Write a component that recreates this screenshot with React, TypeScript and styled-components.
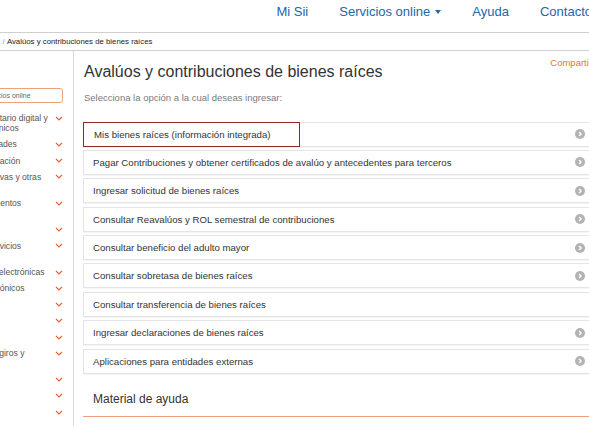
import React from "react";
import styled, { createGlobalStyle } from "styled-components";

const menuItems: string[][] = [
  ["Cumplimiento tributario digital y", "formularios electrónicos"],
  ["Término de actividades"],
  ["Proceso de fiscalización"],
  ["Multas administrativas y otras", "sanciones"],
  ["Registro de documentos", "tributarios"],
  ["Impuestos"],
  ["Certificados de servicios", "en línea"],
  ["Boletas de ventas electrónicas"],
  ["Documentos electrónicos"],
  ["Renta"],
  ["IVA"],
  ["Herencias"],
  ["Modificaciones de giros y", "sucursales"],
  ["Tasación"],
  ["Aduanas"],
  ["Otros"],
];

const options = [
  { label: "Mis bienes raíces (información integrada)", icon: true, active: true },
  { label: "Pagar Contribuciones y obtener certificados de avalúo y antecedentes para terceros", icon: true },
  { label: "Ingresar solicitud de bienes raíces", icon: true },
  { label: "Consultar Reavalúos y ROL semestral de contribuciones", icon: true },
  { label: "Consultar beneficio del adulto mayor", icon: true },
  { label: "Consultar sobretasa de bienes raíces", icon: true },
  { label: "Consultar transferencia de bienes raíces", icon: false },
  { label: "Ingresar declaraciones de bienes raíces", icon: true },
  { label: "Aplicaciones para entidades externas", icon: true },
];

const App: React.FC = () => {
  return (
    <>
      <GlobalStyle />
      <Frame>
        <Header>
          <NavLink href="#">Mi Sii</NavLink>
          <NavLink href="#">
            Servicios online <Caret />
          </NavLink>
          <NavLink href="#">Ayuda</NavLink>
          <NavLink href="#">Contacto</NavLink>
        </Header>
        <Breadcrumb>
          Inicio<Sep>/</Sep>Servicios online<Sep>/</Sep>
          Avalúos y contribuciones de bienes raíces
        </Breadcrumb>
        <Body>
          <Sidebar>
            <Search placeholder="Buscar servicios online" />
            <MenuList>
              {menuItems.map((lines, i) => (
                <MenuItem key={i}>
                  <MenuLabel>
                    {lines.map((line, j) => (
                      <React.Fragment key={j}>
                        {j > 0 && <br />}
                        {line}
                      </React.Fragment>
                    ))}
                  </MenuLabel>
                  <Chevron viewBox="0 0 8 5">
                    <polyline points="1,1 4,4 7,1" />
                  </Chevron>
                </MenuItem>
              ))}
            </MenuList>
          </Sidebar>
          <Main>
            <TitleRow>
              <Title>Avalúos y contribuciones de bienes raíces</Title>
              <Share href="#">Compartir</Share>
            </TitleRow>
            <Subtitle>Selecciona la opción a la cual deseas ingresar:</Subtitle>
            <OptionList>
              {options.map(option => (
                <Option key={option.label}>
                  <OptionLink href="#" $active={option.active}>
                    {option.label}
                  </OptionLink>
                  {option.icon && (
                    <ArrowIcon viewBox="0 0 10 10">
                      <circle cx="5" cy="5" r="5" />
                      <polyline points="4.1,2.9 6.1,5 4.1,7.1" />
                    </ArrowIcon>
                  )}
                </Option>
              ))}
            </OptionList>
            <HelpHeading>Material de ayuda</HelpHeading>
          </Main>
        </Body>
      </Frame>
    </>
  );
};

export default App;

const GlobalStyle = createGlobalStyle`
  html, body {
    margin: 0;
    padding: 0;
    background: #fff;
    overflow: hidden;
  }
  body {
    width: 589px;
    height: 426px;
    font-family: "Liberation Sans", Arial, sans-serif;
  }
`;

// the page is scrolled sideways in the screenshot
const Frame = styled.div`
  width: 684px;
  margin-left: -84px;
`;

const Header = styled.header`
  box-sizing: border-box;
  height: 33px;
  border-bottom: 1px solid #cfcfcf;
  display: flex;
  justify-content: flex-end;
  align-items: flex-start;
  gap: 31px;
  padding: 4px 8px 0 0;
`;

const NavLink = styled.a`
  display: flex;
  align-items: center;
  font-size: 13px;
  line-height: 16px;
  color: #2366ab;
  text-decoration: none;
  white-space: nowrap;
`;

const Caret = styled.span`
  margin-left: 5px;
  border-left: 3.5px solid transparent;
  border-right: 3.5px solid transparent;
  border-top: 4px solid currentColor;
`;

const Breadcrumb = styled.nav`
  box-sizing: border-box;
  height: 18px;
  border-bottom: 1px solid #cfcfcf;
  display: flex;
  align-items: center;
  padding-left: 5px;
  font-size: 7.8px;
  color: #222;
  white-space: pre;
`;

const Sep = styled.span`
  color: #999;
  padding: 0 2.2px;
`;

const Body = styled.div`
  display: flex;
`;

const Sidebar = styled.aside`
  box-sizing: border-box;
  width: 158px;
  flex: none;
  min-height: 376px;
  padding: 37px 10px 0 12px;
  border-right: 1px solid #d9d9d9;
`;

const Search = styled.input`
  display: block;
  box-sizing: border-box;
  width: 100%;
  height: 15px;
  margin: 0;
  padding: 0 4px 0 30px;
  border: 1px solid #eba27a;
  border-radius: 3px;
  font-family: "Liberation Sans", Arial, sans-serif;
  font-size: 7px;
  color: #555;
  outline: none;
  &::placeholder {
    color: #666;
  }
`;

const MenuList = styled.ul`
  margin: 7px 0 0;
  padding: 0;
  list-style: none;
`;

const MenuItem = styled.li`
  display: flex;
  align-items: flex-start;
  gap: 4px;
  padding: 3px 0;
`;

const MenuLabel = styled.span`
  flex: 1;
  min-width: 0;
  font-size: 8.6px;
  line-height: 10.2px;
  color: #555;
  white-space: nowrap;
`;

const Chevron = styled.svg`
  flex: none;
  width: 8px;
  height: 5px;
  margin-top: 2.6px;
  fill: none;
  stroke: #e2643a;
  stroke-width: 1.2;
`;

const Main = styled.main`
  flex: 1;
  min-width: 0;
  padding: 6px 3px 0 9px;
`;

const TitleRow = styled.div`
  display: flex;
  justify-content: space-between;
  align-items: flex-start;
`;

const Title = styled.h1`
  margin: 6px 0 0 1px;
  font-size: 16px;
  line-height: 18px;
  font-weight: normal;
  color: #333;
  white-space: nowrap;
`;

const Share = styled.a`
  margin-right: 5px;
  font-size: 9.5px;
  line-height: 12px;
  color: #e8732f;
  text-decoration: none;
`;

const Subtitle = styled.p`
  margin: 11px 0 0 1px;
  font-size: 9.5px;
  line-height: 12px;
  color: #7a7a7a;
`;

const OptionList = styled.ul`
  margin: 17.5px 0 0;
  padding: 0;
  list-style: none;
`;

const Option = styled.li`
  box-sizing: border-box;
  height: 25px;
  margin-bottom: 3.4px;
  display: flex;
  align-items: center;
  justify-content: space-between;
  padding-right: 11px;
  border: 1px solid #e4e4e4;
  background: #fff;
  box-shadow: 0 1px 1px rgba(0, 0, 0, 0.04);
`;

const OptionLink = styled.a<{ $active?: boolean }>`
  align-self: stretch;
  display: flex;
  align-items: center;
  font-size: 9.65px;
  color: #333;
  text-decoration: none;
  white-space: nowrap;
  padding: ${p => (p.$active ? "0 28px 0 10px" : "0 10px 0 9px")};
  margin: ${p => (p.$active ? "-1px 0 -1px -1px" : "0")};
  border: ${p => (p.$active ? "1px solid #8f2727" : "none")};
`;

const ArrowIcon = styled.svg`
  flex: none;
  width: 10px;
  height: 10px;
  circle {
    fill: #b3b3b3;
  }
  polyline {
    fill: none;
    stroke: #fff;
    stroke-width: 1.4;
  }
`;

const HelpHeading = styled.h2`
  margin: 18px 0 0;
  padding: 0 0 10px 10px;
  font-size: 12px;
  line-height: 14px;
  font-weight: normal;
  color: #333;
  border-bottom: 1px solid #eaa17f;
`;
